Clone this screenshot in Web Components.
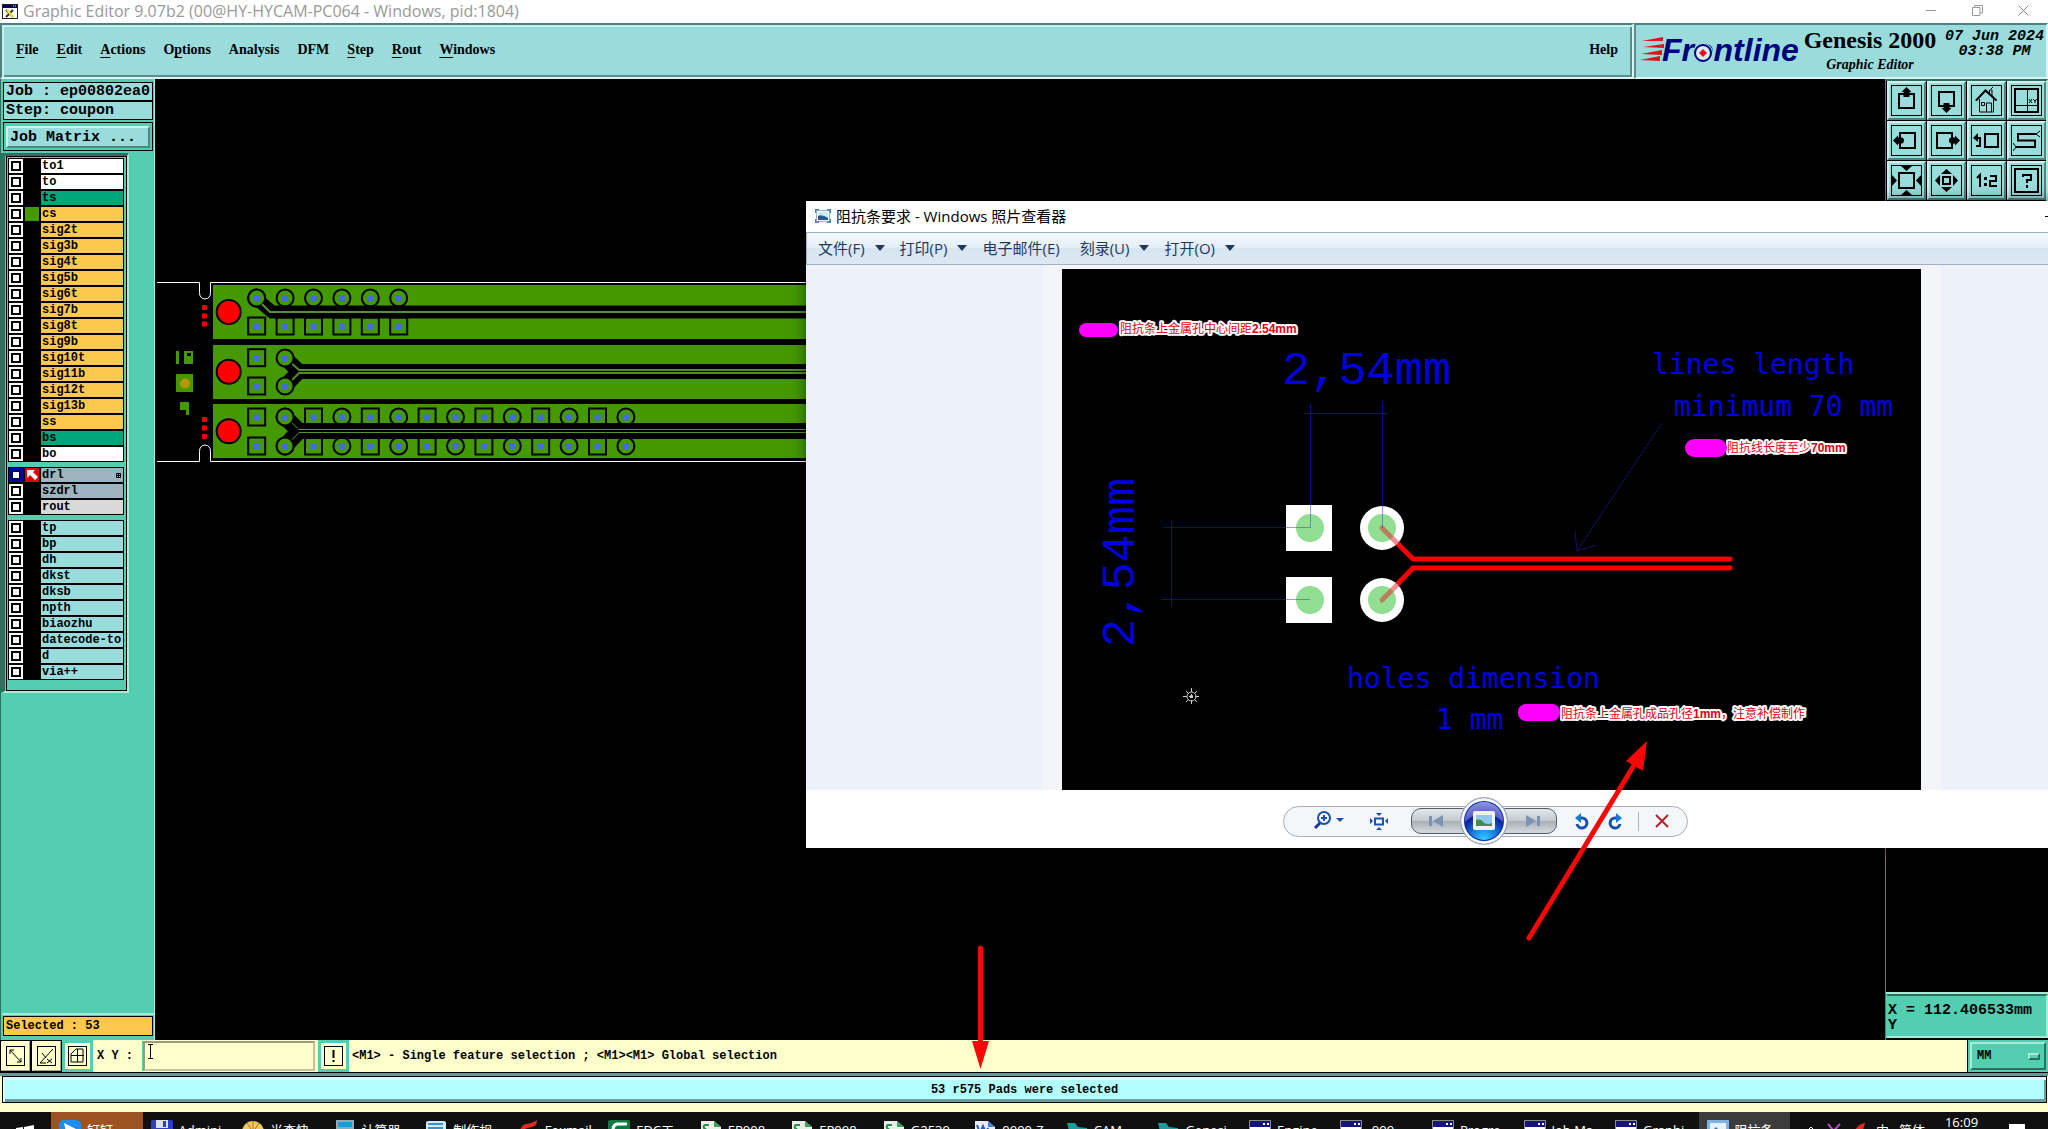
<!DOCTYPE html>
<html lang="zh-CN">
<head>
<meta charset="utf-8">
<title>Graphic Editor</title>
<style>
  html, body { margin: 0; height: 100%; overflow: hidden; background: #000; }
</style>
</head>
<body>
<genesis-desktop></genesis-desktop>
<script>
const SERIF = '"Liberation Serif", serif';
const MONO = '"Liberation Mono", monospace';
const UI = '"Open Sans", "Noto Sans CJK SC", sans-serif';

class Base extends HTMLElement {
  connectedCallback() {
    if (this.shadowRoot) return;
    const t = document.createElement('template');
    t.innerHTML = '<style>*{box-sizing:border-box}button,input,select{font:inherit;color:inherit;margin:0;border-radius:0}svg{display:block}' +
      this.css() + '</style>' + this.html();
    this.attachShadow({ mode: 'open' }).appendChild(t.content.cloneNode(true));
  }
  css() { return ''; }
  html() { return ''; }
}

/* ---------- top of the editor window ---------- */
customElements.define('window-title', class extends Base {
  css() { return `
    :host{display:flex;align-items:center;height:23px;background:#fff;color:#999;font:16px/23px ${UI};padding-left:2px}
    svg.app{margin-right:5px}
    .t{flex:1;white-space:pre}
    button{width:46px;height:23px;padding:0 4px 3px 0;border:0;background:none;display:grid;place-items:center}`; }
  html() { return `
    <svg class="app" width="16" height="15" viewBox="0 0 16 15"><rect x=".5" y=".5" width="15" height="14" fill="#fff" stroke="#222"/><rect x="1" y="1" width="14" height="3" fill="#000060"/><path d="M11 2h1M13 2h1" stroke="#fff"/><path d="M4 6l7 7M11 6l-7 7" stroke="#333" stroke-width="2"/><path d="M5 6l6 7" stroke="#ee3" stroke-width="2"/></svg>
    <span class="t">Graphic Editor 9.07b2 (00@HY-HYCAM-PC064 - Windows, pid:1804)</span>
    <button aria-label="Minimize"><svg width="10" height="10"><path d="M0 5.500h10" stroke="#999"/></svg></button>
    <button aria-label="Restore"><svg width="11" height="11" fill="none" stroke="#999"><path d="M.5 2.500h7.500v8h-7.500zM2.500 2.500v-2h8v7.500h-2.500"/></svg></button>
    <button aria-label="Close"><svg width="11" height="11" stroke="#888"><path d="M.5.5l10 10M10.500.5l-10 10"/></svg></button>`; }
});

customElements.define('menu-bar', class extends Base {
  css() { return `
    :host{display:flex;flex:1;align-items:center;background:#9adbdb;font:bold 14px/18px ${SERIF};color:#000;
      border:2px solid;border-color:#4f8080 #d9f5f5 #d9f5f5 #4f8080;box-shadow:inset 2px 2px #c4f0f0,inset -2px -2px #5b8d8d;padding:0 14px 2px 14px;gap:18px}
    button{border:0;background:none;padding:0;white-space:pre}
    u{text-underline-offset:3px}
    .r{margin-left:auto}`; }
  html() { return `<button><u>F</u>ile</button><button><u>E</u>dit</button><button><u>A</u>ctions</button><button>O<u>p</u>tions</button><button>Analysis</button><button>DFM</button><button><u>S</u>tep</button><button><u>R</u>out</button><button><u>W</u>indows</button><button class="r">Help</button>`; }
});

customElements.define('brand-panel', class extends Base {
  css() { return `
    :host{display:flex;width:414px;background:#9adbdb;border:2px solid;border-color:#4f8080 #d9f5f5 #d9f5f5 #5b8d8d;padding:4px 2px 0 4px;color:#000;justify-content:space-between;white-space:pre}
    .g{text-align:center;font:bold 24px/22px ${SERIF};margin-left:-9px}
    .g i{display:block;font-size:14px;line-height:28px}
    .d{font:italic bold 15px/15px ${MONO};text-align:center}`; }
  html() { return `
    <svg width="164" height="40" viewBox="1640 29 164 40">
      <g fill="#e8101c"><path d="M1642 41l21-4v4zM1643 47l21-3v4zM1641 54l21-4v5zM1640 60l20-4v5z"/></g>
      <text x="1662" y="61" font-family="Liberation Sans,sans-serif" font-weight="bold" font-style="italic" font-size="32" fill="#00007c">Frontline</text>
      <circle cx="1703" cy="53" r="10" fill="#9adbdb"/><circle cx="1703" cy="53" r="8" fill="#d8ecf2" stroke="#00007c" stroke-width="2"/><path d="M1703 49l4 4-4 4-4-4z" fill="#e8101c"/>
    </svg>
    <div class="g">Genesis 2000<i>Graphic Editor</i></div>
    <div class="d">07 Jun 2024<br>03:38 PM</div>`; }
});

/* ---------- left column ---------- */
customElements.define('layer-row', class extends Base {
  css() {
    const sel = this.hasAttribute('active');
    return `
    :host{display:flex;gap:2px;height:14px}
    input{appearance:none;width:14px;height:14px;border:2px solid ${sel ? '#0000b0' : '#fff'};background:#fff;box-shadow:inset 0 0 0 2px ${sel ? '#000060' : '#000'}}
    .c{width:14px;background:${this.getAttribute('swatch') || '#000'}}
    label{flex:1;display:flex;align-items:center;justify-content:space-between;background:${this.getAttribute('tone')};padding:0 2px 0 1px;font:bold 12px/14px ${MONO};color:#000;white-space:pre}`;
  }
  html() {
    const sel = this.hasAttribute('active');
    return `<input id="l" type="checkbox" ${sel ? 'checked' : ''}><span class="c">${sel ? '<svg width="14" height="14"><path d="M2 2h8l-2 2 5 5-3 3-5-5-3 3z" fill="#fff"/></svg>' : ''}</span>
    <label for="l"><slot></slot>${sel ? '<svg width="5" height="5"><path d="M.5.5h4v4h-4zM2.500 0v5M0 2.500h5" fill="none" stroke="#000"/></svg>' : ''}</label>`;
  }
});

customElements.define('side-panel', class extends Base {
  css() { return `
    :host{display:flex;flex-direction:column;width:155px;background:#54ceb0;color:#000;font:bold 15px/17px ${MONO};border-left:1px solid #2f6f5f;border-right:1px solid #a8ecd8;padding-top:3px}
    .job{border:1px solid #000;background:#9adbdb;margin:0 1px 0 2px;height:19px;padding:0 2px;white-space:pre}
    .mx{border:1px solid #000;margin:2px 1px 2px 2px;padding:3px 2px 2px;height:29px}
    .mx button{width:100%;height:22px;background:#9adbdb;border:2px solid;border-color:#c8f4f0 #4f8585 #4f8585 #c8f4f0;padding:0 2px;text-align:left;line-height:17px;display:block}
    .list{width:128px;border-top:3px solid #2f6f5f;border-left:4px solid #2f6f5f;border-right:2px solid #a8ecd8;border-bottom:2px solid #a8ecd8;}
    .in{border:1px solid #000;padding:1px 2px 10px 1px;display:flex;flex-direction:column;gap:5px;margin-left:1px}
    .grp{background:#000;padding:1px;display:grid;gap:2px}
    .sp{flex:1;border-bottom:2px solid #a8ecd8;border-left:2px solid #54ceb0}
    .sel{background:#fec84e;border:1px solid #000;margin:1px 1px 4px 2px;height:20px;font-size:12px;line-height:18px;padding:0 2px;white-space:pre}`; }
  html() {
    const row = (n, c, x = '') => `<layer-row tone="${c}" ${x}>${n}</layer-row>`;
    const o = '#fec84e', g = '#00a57c', w = '#fff', b = '#9adbdb', s = '#9db4c0';
    return `<div class="job">Job : ep00802ea0</div><div class="job">Step: coupon</div>
    <div class="mx"><button>Job Matrix ...</button></div>
    <div class="list"><div class="in">
      <div class="grp">${row('to1', w)}${row('to', w)}${row('ts', g)}${row('cs', o, 'swatch="#449900"')}
      ${['sig2t','sig3b','sig4t','sig5b','sig6t','sig7b','sig8t','sig9b','sig10t','sig11b','sig12t','sig13b','ss'].map(n => row(n, o)).join('')}${row('bs', g)}${row('bo', w)}</div>
      <div class="grp">${row('drl', s, 'active swatch="#e80000"')}${row('szdrl', s)}${row('rout', '#d9d9d9')}</div>
      <div class="grp">${['tp','bp','dh','dkst','dksb','npth','biaozhu','datecode-to','d','via++'].map(n => row(n, b)).join('')}</div>
    </div></div><div class="sp"></div><div class="sel">Selected : 53</div>`;
  }
});

/* ---------- board drawing ---------- */
customElements.define('board-canvas', class extends Base {
  css() { return `:host{display:block;flex:1;background:#000;overflow:hidden;min-width:0}`; }
  html() {
    const G = '#449900', X = k => 256.7 + 28.4 * k;
    const dot = (x, y) => `<rect x="${x - 3}" y="${y - 3}" width="6" height="6" rx="1" fill="#4468ee"/>`;
    const sq = (x, y) => `<rect x="${x - 8.5}" y="${y - 8.5}" width="17" height="17" fill="${G}" stroke="#000" stroke-width="2"/>`;
    const ci = (x, y) => `<circle cx="${x}" cy="${y}" r="8.500" fill="${G}" stroke="#000" stroke-width="2"/>`;
    const red = y => `<circle cx="228.700" cy="${y}" r="13" fill="#000"/><circle cx="228.700" cy="${y}" r="11" fill="#f00"/>`;
    const tiny = y => `<rect x="202" y="${y - 2.5}" width="5" height="5" rx="1" fill="#e00"/>`;
    let s = `<path d="M157 282.500h42.500v10q0 6 5.500 6.500q5.500-.5 5.500-6.500v-10H1200M157 461.500h42.500v-10q0-6 5.500-6.500q5.500.5 5.500 6.500v10H1200" fill="none" stroke="#fff"/>
      <path d="M213 285H1200v54H213zM213 345H1200v54H213zM213 404H1200v54H213z" fill="${G}"/>`;
    for (let k = 0; k < 6; k++) s += ci(X(k), 298) + sq(X(k), 326);
    s += `<path d="M258 300l14 12H1200" fill="none" stroke="#000" stroke-width="13"/>${ci(X(0), 298)}<path d="M262 304l8 8H1200" fill="none" stroke="#5a8f3a" stroke-width="2"/>`;
    s += sq(X(0), 357.7) + sq(X(0), 386);
    s += `<path d="M287 360l12 11.500H1200M287 384l12-12.500" fill="none" stroke="#000" stroke-width="15"/><path d="M289 361l10 9H1200M289 383l10-10H1200" fill="none" stroke="#4f9020" stroke-width="2"/>${ci(X(1), 358)}${ci(X(1), 386)}`;
    for (let k = 0; k < 14; k++) s += [417, 446].map(y => (k % 2 ? ci : sq)(X(k), y)).join('');
    s += `<path d="M287 419l12 12H1200M287 444l12-13" fill="none" stroke="#000" stroke-width="16"/><path d="M289 420l10 9.500H1200M289 443l10-10.500H1200" fill="none" stroke="#5a8f3a"/>${ci(X(1), 417)}${ci(X(1), 446)}`;
    for (let k = 0; k < 6; k++) s += dot(X(k), 298.5) + dot(X(k), 326.5);
    [0, 1].forEach(k => s += dot(X(k), 358) + dot(X(k), 386.5));
    for (let k = 0; k < 14; k++) s += dot(X(k), 417.5) + dot(X(k), 446);
    s += red(312) + red(371.7) + red(431.3) + [307.5, 316, 324, 419.5, 428, 436.5].map(tiny).join('');
    s += `<path d="M176 351h3v13h-3zM184 351h9v13h-9zM176 374h17v18h-17zM180 402h9v13h-3v-5h-6z" fill="${G}"/><rect x="187" y="353" width="4" height="3"/><circle cx="185" cy="383.500" r="5" fill="#b8960c"/>`;
    return `<svg width="1000" height="600" viewBox="155 79 1000 600">${s}</svg>`;
  }
});

/* ---------- right column ---------- */
customElements.define('view-tools', class extends Base {
  css() { return `
    :host{display:flex;flex-direction:column;width:163px;background:#000;border-left:1px solid #2f8f78;color:#000}
    .pad{display:grid;grid-template-columns:repeat(4,40px);grid-auto-rows:40px;border-top:2px solid #2f6f5f;border-right:2px solid #a8ecd8;background:#000;padding-left:1px}
    button{width:39px;height:39px;padding:2px;background:#9adbdb;border:2px solid;border-color:#c8f4f0 #4f8585 #4f8585 #c8f4f0;display:grid;place-items:center}
    button svg{border:1px solid #000}
    .xy{margin-top:auto;background:#54ceb0;border:2px solid;border-color:#2f6f5f #a8ecd8 #a8ecd8 #54ceb0;box-shadow:0 -2px #a8ecd8;height:44px;font:bold 15px/15px ${MONO};padding:7px 0;white-space:pre;margin-bottom:2px}`; }
  html() {
    const S = (n, b) => `<button aria-label="${n}"><svg width="31" height="31" viewBox="1 1 29 29" fill="none" stroke="#000" stroke-width="2">${b}</svg></button>`;
    return `<div class="pad">
    ${S('Pan up', '<rect x="8" y="9" width="15" height="14"/><path d="M15.500 2l5 5h-2v5h-6v-5h-2z" fill="#000" stroke="none"/>')}
    ${S('Pan down', '<rect x="8" y="7" width="15" height="14"/><path d="M15.500 28l5-5h-2v-5h-6v5h-2z" fill="#000" stroke="none"/>')}
    ${S('Home', '<path d="M5 15.500L14.500 5.500l11 10M8.500 14v13h14v-13M15.500 27v-9h5v9M10.500 17.500h3v3h-3zM18.500 9v-4h2.500v6M22 2l-2 2" stroke-width="1"/><path d="M5 15.500L14.500 5.500l11 10"/>')}
    ${S('Quadrants', '<path d="M4 4h23v23h-23z"/><path d="M16.500 4v23M4 20.500h23" stroke-width="1"/><path d="M18 14l3 4M21 14l-3 4M22 14l2 2 2-2M24 16v2" stroke-width="1"/>')}
    ${S('Pan left', '<rect x="9" y="8" width="15" height="15"/><path d="M2 15.500l5-5v2q6-1 6 3t-6 3v2z" fill="#000" stroke="none"/>')}
    ${S('Pan right', '<rect x="6" y="8" width="15" height="15"/><path d="M29 15.500l-5-5v2q-6-1-6 3t6 3v2z" fill="#000" stroke="none"/>')}
    ${S('Previous view', '<rect x="14" y="9" width="13" height="13"/><path d="M5 13h4v8h-4"/><path d="M2 13l5-5v9z" fill="#000" stroke="none"/>')}
    ${S('Serpentine', '<path d="M25 9H7v6.500h17V22H5"/><path d="M25 9l4-3M25 9l4 3M5 22l-3-4M5 22l-3 4" stroke-width="1"/>')}
    ${S('Zoom out', '<rect x="8" y="8" width="15" height="15"/><path d="M10 1h11l-5.500 5zM10 30h11l-5.500-5zM1 10v11l5-5.500zM30 10v11l-5-5.500z" fill="#000" stroke="none"/>')}
    ${S('Zoom in', '<rect x="12" y="12" width="7" height="7"/><path d="M10 9h11l-5.500-5zM10 22h11l-5.500 5zM9 10v11l-5-5.500zM22 10v11l5-5.500z" fill="#000" stroke="none"/>')}
    ${S('Scale', '<path d="M6 13l3-3v12M19 11h6v5h-6v5h7" stroke-width="2"/><path d="M13 12h3v3h-3zM13 18h3v3h-3z" fill="#000" stroke="none"/>')}
    ${S('Help', '<path d="M4 4h23v23h-23z"/><path d="M12 12v-2h8v5h-4v3M16 20v3"/>')}
    </div><div class="xy">X = 112.406533mm<br>Y</div>`;
  }
});

/* ---------- bottom bars ---------- */
customElements.define('command-bar', class extends Base {
  css() { return `
    :host{display:flex;align-items:stretch;height:33px;background:#ffffcc;border-bottom:1px solid #000;color:#000;font:bold 12px/18px ${MONO}}
    button{width:31px;padding:0;background:#ffffcc;border:2px solid;border-color:#ffffe8 #a5a38a #a5a38a #ffffe8;outline:1px solid #000;outline-offset:-1px;display:grid;place-items:center}
    button.on{border-color:#54ceb0;border-width:3px;outline:0}
    label{display:flex;align-items:center;padding:0 10px 0 4px;white-space:pre}
    input{width:172px;margin:1px 0;background:#ffffcc;border:2px solid;border-color:#9c9a80 #c5c39c #c5c39c #9c9a80;outline:0;box-shadow:-1px 0 #54ceb0;padding:0 4px 8px}
    .f{position:relative;display:flex;margin-right:3px}
    .f svg{position:absolute;left:5px;top:4px}
    .m{flex:1;display:flex;align-items:center;padding-left:3px;white-space:pre;border-right:1px solid #000}
    .u{width:80px;background:#54ceb0;padding:2px;position:relative}
    select{appearance:none;width:100%;height:100%;background:#54ceb0;border:2px solid;border-color:#a8ecd8 #2f6f5f #2f6f5f #a8ecd8;padding:0 5px}
    .u::after{content:"";position:absolute;right:8px;top:13px;width:12px;height:7px;border:2px solid;border-color:#a8ecd8 #2f6f5f #2f6f5f #a8ecd8;pointer-events:none;box-sizing:border-box}`; }
  html() {
    const S = b => `<svg width="19" height="20" viewBox="0 0 19 20" fill="none" stroke="#000"><rect x=".5" y=".5" width="18" height="19"/>${b}</svg>`;
    return `<button aria-label="Snap">${S('<path d="M4 4l11 12M4 8v-4h4M15 12v4h-4"/>')}</button>
    <button aria-label="Angle">${S('<path d="M3 17L16 3M3 17h6M5 7l4 5M10 13l5 4M15 13l-5 4"/>')}</button>
    <button class="on" aria-label="Grid">${S('<path d="M3 16V8l5-5h7v13zM9.500 3v13M3 9.500h13"/>')}</button>
    <label for="xy">X Y :</label><span class="f"><input id="xy" type="text"><svg width="5" height="15" stroke="#000" fill="none"><path d="M0 .5h5M2.500 0v15M0 14.500h5"/></svg></span>
    <button class="on" aria-label="Alert">${S('<path d="M9.500 4v8M9.500 14v2" stroke-width="2"/>')}</button>
    <span class="m">&lt;M1&gt; - Single feature selection ; &lt;M1&gt;&lt;M1&gt; Global selection</span>
    <span class="u"><select aria-label="Units"><option>MM</option><option>INCH</option></select></span>`;
  }
});

customElements.define('status-line', class extends Base {
  css() { return `
    :host{display:block;background:#ffffcc;height:39px;border-top:3px solid #5f9c9c}
    div{height:27px;margin:0 1px 0 2px;border:1px solid #000;background:#b3ffff;box-shadow:inset 2px 3px #d8ffff,inset -2px -3px #6a9c9c;font:bold 12px/26px ${MONO};text-align:center;color:#000;white-space:pre}`; }
  html() { return `<div>53 r575 Pads were selected</div>`; }
});

customElements.define('task-item', class extends Base {
  css() { return `
    :host{display:flex;flex:1 1 0;min-width:0;height:40px;padding:8px 0 0 8px;gap:6px;background:${this.getAttribute('tone') || 'none'};color:#fff;font:13px/20px ${UI};white-space:pre;box-sizing:border-box}
    svg{flex:none}`; }
  html() {
    const I = {
      bird: '<rect width="22" height="22" rx="5" fill="#1e8ff0"/><path d="M5 3l12 6-5 4 3 7-8-8z" fill="#fff"/>',
      floppy: '<rect width="22" height="22" rx="2" fill="#2d3fc0"/><path d="M5 0h12v8h-12z" fill="#dde"/><path d="M12 1h3v6h-3z" fill="#2d3fc0"/>',
      shell: '<circle cx="11" cy="12" r="11" fill="#f0c860"/><path d="M11 12L5 3M11 12V1M11 12l6-9" stroke="#a87820"/>',
      calc: '<rect x="2" width="18" height="22" fill="#8fa9b8"/><rect x="4" y="2" width="14" height="5" fill="#1f9ad8"/>',
      note: '<rect x="1" y="1" width="20" height="21" rx="2" fill="#cfeaf8"/><path d="M3 4h15M3 8h15" stroke="#3a90c8" stroke-width="2"/>',
      fox: '<path d="M2 20Q2 5 9 4T20 0q0 6-5 7T8 9q-2 2-2 11z" fill="#e02b20"/>',
      greenapp: '<rect width="22" height="22" rx="2" fill="#0d7a3f"/><path d="M19 4H9Q5 5 5 10v12" stroke="#fff" stroke-width="3" fill="none"/>',
      sheet: '<path d="M1 1h13l7 6v15H1z" fill="#e8efe8"/><path d="M9 5H5Q3 6 4 8l4 3M8 11q0 3-4 3" stroke="#2a8f4a" stroke-width="2" fill="none"/><path d="M14 1v6h7z" fill="#3aa05a"/>',
      doc: '<path d="M1 1h13l7 6v15H1z" fill="#e8ecf8"/><path d="M3 5l3 8 3-7 3 7 2-5" stroke="#2a5ac0" stroke-width="2" fill="none"/><path d="M14 1v6h7z" fill="#4a7ad8"/>',
      cam: '<path d="M1 3l8 0 3 4 9 1v12h-8l-3-9-7 0z" fill="#1f9a98"/>',
      win: '<rect x=".5" y=".5" width="21" height="20" fill="#fff" stroke="#888"/><rect x="1" y="1" width="20" height="6" fill="#14147a"/><path d="M14 4h2M18 4h2" stroke="#fff" stroke-width="2"/>',
      photo: '<rect width="22" height="22" fill="#7fb4e0"/><rect x="3" y="3" width="16" height="12" fill="#e4f2fc"/><path d="M3 13l6-6 5 5 5-3v6H3z" fill="#3a78b8"/>'
    };
    return `<svg width="22" height="22" viewBox="0 0 22 22">${I[this.getAttribute('icon')]}</svg><span><slot></slot></span>`;
  }
});

customElements.define('win-taskbar', class extends Base {
  css() { return `
    :host{display:flex;height:17px;background:#101010;overflow:hidden;color:#fff;font:13px/20px ${UI};align-items:flex-start;white-space:pre}
    .s{width:51px;padding:13px 0 0 16px}
    .tray{width:258px;display:flex;padding:8px 22px 0 16px;gap:10px;align-items:flex-start}
    .k{line-height:16px;margin:-6px 0 0 auto;padding-right:20px}
    .tray svg{margin-top:3px;flex:none}`; }
  html() {
    const a = [['floppy','Admini'],['shell','光查快'],['calc','计算器'],['note','制作规'],['fox','Foxmail'],['greenapp','EDC工'],['sheet','EP008'],['sheet','EP008'],['sheet','G2539'],['doc','0000-Z'],['cam','CAM'],['cam','Genesi'],['win','Engine'],['win',' 099'],['win','Progre'],['win','Job Ma'],['win','Graphi']];
    return `<div class="s"><svg width="18" height="18"><path d="M0 3l7-1v7H0zM8 2l10-2v9H8z" fill="#fff"/></svg></div>
    <task-item icon="bird" tone="#9c5420">钉钉</task-item>${a.map(([i, t]) => `<task-item icon="${i}">${t}</task-item>`).join('')}<task-item icon="photo" tone="#3c3c3c">阻抗条</task-item>
    <div class="tray"><svg width="10" height="12"><path d="M1 8l4-4 4 4" stroke="#fff" fill="none"/></svg><svg width="16" height="14"><path d="M2 1l10 12M14 1L3 13" stroke="#b050c0" stroke-width="2"/></svg><svg width="14" height="14"><path d="M1 13Q3 2 13 0l-2 7z" fill="#e02b20"/></svg><span>中</span><span>简体</span><span class="k">16:09</span><svg width="18" height="14"><path d="M1 1h16v9H1z" fill="#fff"/></svg></div>`;
  }
});

/* ---------- photo viewer ---------- */
customElements.define('photo-controls', class extends Base {
  css() { return `
    :host{display:flex;justify-content:center;align-items:center;height:58px;background:#fff;padding:4px 12px 0 0}
    .p{display:flex;align-items:center;height:31px;border:1px solid #a9adb8;border-radius:16px;background:#f3f7fa;padding:0 9px 0 20px}
    button{border:0;background:none;padding:0;height:26px;display:grid;place-items:center}
    .w{width:50px}.n{width:33px}
    .cap{display:flex;align-items:center;margin:0 8px 0 7px}
    .cap .e{width:53px;background:linear-gradient(#e4e8ec,#c4cacf 48%,#a9b0b6 52%,#d5dade);border:1px solid #555d66}
    .l{border-radius:10px 0 0 10px !important;padding-right:4px}.r{border-radius:0 10px 10px 0 !important;padding-left:4px}
    .cap .o{width:48px;height:48px;border-radius:50%;margin:0 -4px;z-index:1;border:1px solid #a9adb8;background:radial-gradient(circle at 50% 90%,#30d0ff 0,#1878e0 28%,#0a20a0 52%,#5a60c8 56%,#aab0e8 90%);box-shadow:inset 0 0 0 3px #f3f7fa,inset 0 0 0 4px #1030a0}
    i{width:1px;height:19px;background:#b0b4b8;margin:0 6px 0 7px}`; }
  html() { return `<div class="p">
    <button class="w" aria-label="Zoom"><svg width="32" height="20" fill="none" stroke="#1a50b0" stroke-width="2"><circle cx="11" cy="7" r="6"/><path d="M8 7h6M11 4v6"/><path d="M7 12l-5 5" stroke="#1a3a90" stroke-width="3"/><path d="M23 7h8l-4 4z" fill="#1a50b0" stroke="none"/></svg></button>
    <button class="w" aria-label="Fit"><svg width="18" height="17"><rect x="5" y="5.500" width="8" height="6" fill="none" stroke="#1a50b0" stroke-width="2"/><path d="M6 0h6l-3 3zM6 17h6l-3-3zM0 5v6l3-3zM18 5v6l-3-3z" fill="#1a50b0"/></svg></button>
    <div class="cap"><button class="e l" aria-label="Previous"><svg width="14" height="12" fill="#7b93b5"><path d="M0 1h3v10H0zM14 0v12L4 6z"/></svg></button>
    <button class="o" aria-label="Slide show"><svg width="22" height="20"><rect width="22" height="19" rx="2" fill="#f0f0f0"/><rect x="3" y="4" width="16" height="11" fill="#90c8e8"/><path d="M3 9q5-2 8 3 4 2 8 0v3H3z" fill="#3f8a58"/></svg></button>
    <button class="e r" aria-label="Next"><svg width="14" height="12" fill="#7b93b5"><path d="M11 1h3v10h-3zM0 0v12l10-6z"/></svg></button></div>
    <button class="n" aria-label="Rotate left"><svg width="16" height="17"><path d="M5 5h3a5 5 0 1 1-5 6" fill="none" stroke="#1a50b0" stroke-width="3"/><path d="M7 0v10L1 5z" fill="#1878d8"/></svg></button>
    <button class="n" aria-label="Rotate right"><svg width="16" height="17"><path d="M11 5H8a5 5 0 1 0 5 6" fill="none" stroke="#1a50b0" stroke-width="3"/><path d="M9 0v10l6-5z" fill="#1878d8"/></svg></button>
    <i></i><button class="n" aria-label="Delete"><svg width="14" height="14" stroke="#b8202c" stroke-width="2"><path d="M1 1l12 12M13 1L1 13"/></svg></button></div>`; }
});

customElements.define('photo-picture', class extends Base {
  css() { return `:host{display:block;background:#000}text{white-space:pre}`; }
  html() {
    const note = (x, y, t) => `<text x="${x}" y="${y}" font-family="Liberation Sans,Noto Sans CJK SC,sans-serif" font-size="12" fill="#e00010" stroke="#fff" stroke-width="4" stroke-linejoin="round" paint-order="stroke">${t.replace(/[0-9.m]+/g, m => `<tspan font-weight="bold">${m}</tspan>`)}</text>`;
    return `<svg width="859" height="521" viewBox="1062 269 859 521">
    <g stroke="#0d0d8c" fill="none"><path d="M1310.500 404v101M1382.500 401v104M1304 413.500h84M1163 527.500h123M1161 599.500h125M1171.500 521v86"/><path d="M1662 423l-85 128M1575 531l2 20 19-6" stroke="#12126a"/></g>
    <path d="M1382 528l31 31H1730M1382 600l31-32H1730" fill="none" stroke="#f60000" stroke-width="5" stroke-linecap="round"/>
    <path d="M1286 505h46v46h-46zM1286 577h46v46h-46z" fill="#fff"/><circle cx="1382" cy="528" r="22" fill="#fff"/><circle cx="1382" cy="600" r="22" fill="#fff"/>
    <g fill="#92de92"><circle cx="1310" cy="528" r="14"/><circle cx="1310" cy="600" r="14"/><circle cx="1382" cy="528" r="14"/><circle cx="1382" cy="600" r="14"/></g>
    <path d="M1382 528l17 17M1382 600l17-17" stroke="#e02020" stroke-opacity=".5" stroke-width="5" stroke-linecap="round"/>
    <path d="M1310.500 505v23M1382.500 505v23M1286 527.500h24M1286 599.500h24" stroke="#4040a0" stroke-opacity=".5"/>
    <g fill="#0000e0" font-family="Liberation Mono,monospace" font-size="47"><text x="1282" y="384">2,54mm</text><text transform="translate(1134 647) rotate(-90)">2,54mm</text></g>
    <g fill="#0000e8" font-family="DejaVu Sans Mono,monospace" font-size="28"><text x="1652" y="374">lines length</text><text x="1674" y="416">minimum 70 mm</text><text x="1347" y="688">holes dimension</text><text x="1436" y="729">1 mm</text></g>
    ${note(1120, 333, '阻抗条上金属孔中心间距2.54mm')}${note(1727, 452, '阻抗线长度至少70mm')}${note(1561, 718, '阻抗条上金属孔成品孔径1mm，注意补偿制作')}
    <g fill="#f0f"><rect x="1079" y="323" width="39" height="14" rx="7"/><rect x="1685" y="439" width="42" height="18" rx="9"/><rect x="1518" y="704" width="42" height="17" rx="8"/></g>
    <g fill="none" stroke="#ccc"><circle cx="1191.500" cy="696.500" r="4.500"/><path d="M1191.500 688v17M1183 696.500h17M1186 691l11 11M1197 691l-11 11" stroke-dasharray="4 2"/></g>
    </svg>`;
  }
});

customElements.define('photo-viewer', class extends Base {
  css() { return `
    :host{display:flex;flex-direction:column;width:1371px;background:#fff;box-shadow:0 0 14px rgba(0,0,0,.5);color:#000;font:15px/20px ${UI};white-space:pre}
    header{display:flex;align-items:center;height:31px;padding:0 0 2px 9px}
    header span{flex:1;padding-left:5px}
    header button{width:44px;border:0;padding:0;background:none}
    nav{display:flex;align-items:center;height:33px;border:1px solid #9fb0c6;border-width:1px 0 1px 1px;background:linear-gradient(#f4f9fd,#e4eef8 48%,#d7e5f2 50%,#dce8f4);padding:0 0 2px 11px;color:#1e395b;gap:15px}
    nav button{border:0;padding:0;background:none;display:flex;align-items:center;gap:10px;height:24px}
    nav .m{margin-right:5px}
    .st{display:flex;justify-content:center;background:#edf1f9;height:525px}
    .fr{padding:4px 20px 0;background:#f3f5f8}`; }
  html() {
    const c = '<svg width="10" height="6"><path d="M0 0h10L5 6z" fill="#1e395b"/></svg>';
    return `<header><svg width="16" height="14" fill="none"><path d="M1.500 1.500h13v11h-13z" stroke="#8ab4d4"/><path d="M3 3h10v8H3z" fill="#cfe8f8"/><path d="M3 7q4-2 10 2v2H3z" fill="#1f5f90"/><path d="M0 4V.5h4M12 .5h3.500V4M0 10v3.500h4M12 13.500h3.500V10" stroke="#4a84b4" stroke-width="2"/></svg><span>阻抗条要求 - Windows 照片查看器</span><button aria-label="Minimize"><svg width="10" height="10"><path d="M0 5.500h10" stroke="#000"/></svg></button><button aria-label="Maximize"><svg width="10" height="10"><path d="M.5.5h9v9h-9z" fill="none" stroke="#000"/></svg></button><button aria-label="Close"><svg width="10" height="10"><path d="M0 0l10 10M10 0L0 10" stroke="#000"/></svg></button></header>
    <nav><button>文件(F)${c}</button><button>打印(P)${c}</button><button class="m">电子邮件(E)</button><button>刻录(U)${c}</button><button>打开(O)${c}</button></nav>
    <div class="st"><div class="fr"><photo-picture></photo-picture></div></div><photo-controls></photo-controls>`;
  }
});

/* ---------- desktop ---------- */
customElements.define('genesis-desktop', class extends Base {
  css() { return `
    :host{display:flex;flex-direction:column;height:100vh;position:relative;overflow:hidden}
    .top{display:flex;height:56px}
    .mid{display:flex;flex:1;min-height:0}
    photo-viewer{position:absolute;left:806px;top:201px}
    .marks{position:absolute;left:0;top:0;pointer-events:none}`; }
  html() { return `<window-title></window-title>
    <div class="top"><menu-bar></menu-bar><brand-panel></brand-panel></div>
    <div class="mid"><side-panel></side-panel><board-canvas></board-canvas><view-tools></view-tools></div>
    <command-bar></command-bar><status-line></status-line><win-taskbar></win-taskbar>
    <photo-viewer></photo-viewer>
    <svg class="marks" width="2048" height="1129"><g fill="#f60808"><path d="M978 947q2.500-3 5 0v94h6l-8.500 28-8.500-28h6z"/><path d="M1529 938L1636 762" stroke="#f60808" stroke-width="5" stroke-linecap="round"/><path d="M1647 741l-4 30-17-10z"/></g></svg>`; }
});
</script>
</body>
</html>
